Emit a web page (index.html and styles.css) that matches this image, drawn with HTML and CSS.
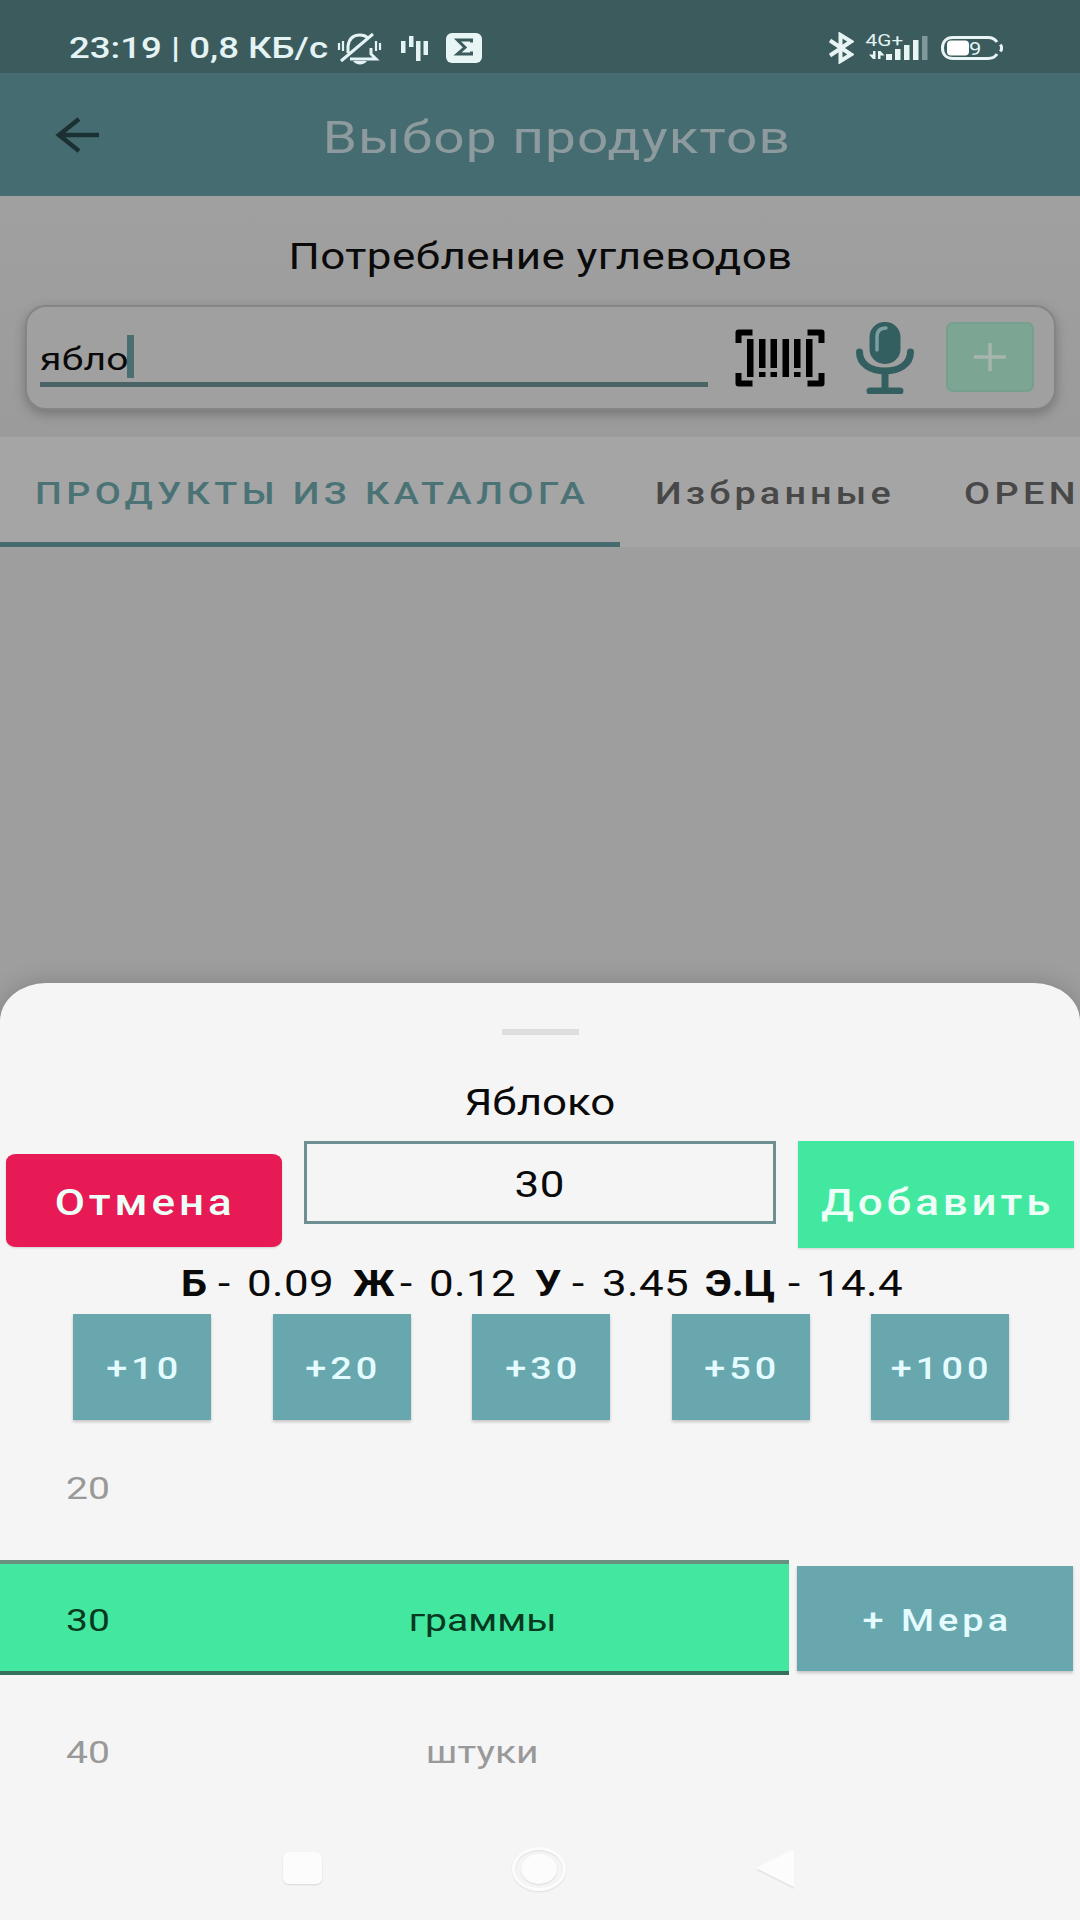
FILE: index.html
```html
<!DOCTYPE html>
<html lang="ru">
<head>
    <meta charset="UTF-8">
    <meta name="viewport" content="width=device-width, initial-scale=1.0">
    <title>Выбор продуктов</title>
    <link rel="stylesheet" href="styles.css">
</head>
<body>
    <div id="screen">
        <div id="status">
            <div class="clock"><span class="t left">23:19 | 0,8 КБ/с</span></div>
            <svg class="bell" width="46" height="34" viewBox="0 0 46 34" fill="none" stroke="#e4f3f3" stroke-width="3">
                <path d="M11 21v-7C12 7 16 3 23 3c3 0 6 1 8 3M13 27h26l-5-5v-6M4 29L36 2"/>
                <path d="M16 29h14c-3 4.500-11 4.500-14 0z" fill="#e4f3f3" stroke="none"/>
                <path d="M2 11v7M6 9v10M39 9v10M43 11v7" stroke-width="2.200"/>
            </svg>
            <svg class="wave" width="28" height="26" viewBox="0 0 28 26" fill="#e4f3f3">
                <path d="M0 5h4.500v12H0zM8 0h4.500v11H8zM15 5h4.500v20H15zM22.500 5H27v14h-4.500z"/>
            </svg>
            <svg class="sigma" width="36" height="30" viewBox="0 0 36 30">
                <rect width="36" height="30" rx="6" fill="#e9f5f5"/>
                <path d="M25.500 9.500V7H11.500l7.500 7.500-7.500 6.500h14v-2.500" fill="none" stroke="#3b5b5d" stroke-width="3"/>
            </svg>
            <svg class="bt" width="26" height="32" viewBox="0 0 26 32" fill="none" stroke="#e9f5f5" stroke-width="4">
                <path d="M2 8.500l21 14L12.500 29V3L23 9.500 2 23.500"/>
            </svg>
            <div class="signal">
                <span class="t net">4G+</span>
                <svg width="62" height="26" viewBox="0 0 62 26" fill="#e9f5f5">
                    <path d="M4 15h2.500v8H4zM0 18.500h4V23zM9 15h2.500v8H9zM11.500 15l4 4.500h-4z"/>
                    <rect x="17" y="18" width="6" height="6"/>
                    <rect x="26" y="13" width="5.500" height="11"/>
                    <rect x="35" y="9" width="5.500" height="15"/>
                    <rect x="44" y="4" width="5.500" height="20"/>
                    <rect x="53" y="0" width="5.500" height="24" opacity=".4"/>
                </svg>
            </div>
            <div class="battery">
                <svg width="62" height="24" viewBox="0 0 62 24" fill="none" stroke="#e9f5f5" stroke-width="3">
                    <path d="M56 6C54 3 51 1.500 47 1.500H12C5 1.500 1.500 6 1.500 12S5 22.500 12 22.500h35c4 0 7-1.500 9-4.500"/>
                    <rect x="6" y="4.500" width="22" height="15" rx="4" fill="#fff" stroke="none"/>
                    <path d="M59.500 8.500c1.200 2 1.200 5 0 7"/>
                </svg>
                <span class="t level">9</span>
            </div>
        </div>

        <div id="header">
            <svg class="back" width="46" height="36" viewBox="0 0 46 36" fill="none" stroke="#1b3033" stroke-width="4.500">
                <path d="M44 18H4M24 2L4 18l20 16"/>
            </svg>
            <h1><span class="t">Выбор продуктов</span></h1>
        </div>

        <div id="search">
            <h2><span class="t">Потребление углеводов</span></h2>
            <div class="card">
                <div class="field"><span class="t left">ябло</span><i class="cursor"></i></div>
                <svg class="barcode" width="90" height="58" viewBox="0 0 90 58">
                    <path d="M3.500 14V3.500h14M72.500 3.500h14V14M86.500 44v10.500h-14M17.500 54.500h-14V44" fill="none" stroke="#000" stroke-width="6" stroke-linejoin="round"/>
                    <path d="M12 10h6.500v38H12zM24 10h6.500v29H24zM24 43h6.500v5H24zM35.500 10H42v29h-6.500zM35.500 43H42v5h-6.500zM47.500 10H54v38h-6.500zM59 10h6.500v29H59zM59 43h6.500v5H59zM71 10h6.500v38H71z"/>
                </svg>
                <svg class="mic" width="58" height="72" viewBox="0 0 58 72">
                    <rect x="13.500" y="0" width="31" height="42" rx="15" fill="#345f61"/>
                    <path d="M3.500 30c0 12 11 19 25.500 19s25.500-7 25.500-19M29 49v20M14 69h30" fill="none" stroke="#345f61" stroke-width="7" stroke-linecap="round"/>
                    <path d="M21 28V15c0-6 3-9 9-9" fill="none" stroke="#7b9fa0" stroke-width="3.500" stroke-linecap="round"/>
                </svg>
                <div class="plus">
                    <svg width="32" height="28" viewBox="0 0 32 28" stroke="#a6b5ad" stroke-width="3.500"><path d="M0 14h32M16 0v28"/></svg>
                </div>
            </div>
        </div>

        <div id="tabs">
            <div class="tab active"><span class="t left">ПРОДУКТЫ ИЗ КАТАЛОГА</span></div>
            <div class="tab fav"><span class="t left">Избранные</span></div>
            <div class="tab open"><span class="t left">OPEN</span></div>
        </div>

        <div id="sheet">
            <div class="handle"></div>
            <h3><span class="t">Яблоко</span></h3>
            <div class="entry">
                <div class="cancel"><span class="t sp">Отмена</span></div>
                <div class="amount"><span class="t">30</span></div>
                <div class="add"><span class="t sp">Добавить</span></div>
            </div>
            <div class="facts">
                <b class="t left">Б</b><span class="t left">-</span><span class="t left">0.09</span>
                <b class="t left">Ж</b><span class="t left">-</span><span class="t left">0.12</span>
                <b class="t left">У</b><span class="t left">-</span><span class="t left">3.45</span>
                <b class="t left">Э.Ц</b><span class="t left">-</span><span class="t left">14.4</span>
            </div>
            <div class="steps">
                <div class="btn"><span class="t">+10</span></div>
                <div class="btn"><span class="t">+20</span></div>
                <div class="btn"><span class="t">+30</span></div>
                <div class="btn"><span class="t">+50</span></div>
                <div class="btn"><span class="t">+100</span></div>
            </div>
            <div class="picker">
                <div class="row"><div class="num"><span class="t">20</span></div></div>
                <div class="middle">
                    <div class="row selected">
                        <div class="num"><span class="t">30</span></div>
                        <div class="unit"><span class="t">граммы</span></div>
                    </div>
                    <div class="btn measure"><span class="t">+ Мера</span></div>
                </div>
                <div class="row">
                    <div class="num"><span class="t">40</span></div>
                    <div class="unit"><span class="t">штуки</span></div>
                </div>
            </div>
            <div class="nav">
                <div class="square"></div>
                <div class="home"><div></div></div>
                <svg class="prev" width="42" height="42" viewBox="0 0 42 42">
                    <path d="M1 22L39 41V4" fill="#e6e6e6"/>
                    <path d="M1 20L39 1v38z" fill="#fcfcfc"/>
                </svg>
            </div>
        </div>
    </div>
</body>
</html>
```
FILE: styles.css
```css
*{
    box-sizing: border-box;
}
body{
    margin: 0;
    font-family: Roboto, sans-serif;
    background: #9e9e9e;
}
h1, h2, h3{
    margin: 0;
    font-weight: 400;
}
#screen{
    width: 1080px;
    height: 1920px;
    display: flex;
    flex-direction: column;
    overflow: hidden;
    background: #9e9e9e;
}
/* wide lettering used everywhere */
.t{
    display: inline-block;
    white-space: pre;
    transform: scaleX(1.22);
}
.left{
    transform-origin: left;
}

#status{
    height: 73px;
    flex: none;
    display: flex;
    align-items: flex-start;
    padding-left: 69px;
    background: #3b5b5d;
    color: #e4f3f3;
}
.clock{
    width: 268px;
    font-size: 30px;
    line-height: 96px;
    font-weight: 500;
}
.bell{
    margin-top: 32px;
}
.wave{
    margin: 36px 0 0 18px;
}
.sigma{
    margin: 33px 0 0 17px;
}
.bt{
    margin: 32px 0 0 346px;
}
.signal{
    margin: 31px 0 0 12px;
    width: 64px;
    position: relative;
}
.signal svg{
    margin: 5px 0 0 3px;
}
.net{
    position: absolute;
    left: 3px;
    top: 0;
    font-size: 17px;
    line-height: 18px;
}
.battery{
    margin: 36px 0 0 11px;
    position: relative;
}
.level{
    position: absolute;
    left: 29px;
    top: 1px;
    font-size: 18px;
    line-height: 24px;
}

#header{
    height: 123px;
    flex: none;
    display: flex;
    align-items: center;
    background: #456c70;
}
.back{
    margin-left: 55px;
}
#header h1{
    width: 911px;
    margin-top: 6px;
    text-align: center;
    font-size: 45px;
    line-height: 60px;
    letter-spacing: 0.9px;
    color: #8e9b9e;
}

#search{
    height: 241px;
    flex: none;
    padding: 37px 24px 0 25px;
    background: linear-gradient(#a0a0a0, #9b9b9b);
}
#search h2{
    height: 72px;
    text-align: center;
    font-size: 36px;
    line-height: 48px;
    letter-spacing: 0.35px;
    color: #0a0a0a;
}
.card{
    height: 105px;
    display: flex;
    align-items: flex-start;
    border: 2px solid #858585;
    border-radius: 21px;
    background: #a0a0a0;
    box-shadow: 0 4px 12px rgba(0, 0, 0, 0.25);
}
.field{
    width: 668px;
    height: 65px;
    margin: 15px 0 0 13px;
    display: flex;
    border-bottom: 5px solid #4a6365;
    font-size: 32px;
    line-height: 74px;
    letter-spacing: 0.2px;
    color: #0a0a0a;
}
.field .t{
    width: 87px;
}
.cursor{
    width: 7px;
    height: 43px;
    margin-top: 13px;
    background: #4b6f71;
}
.barcode{
    margin: 22px 0 0 27px;
}
.mic{
    margin: 15px 0 0 31px;
}
.plus{
    width: 88px;
    height: 70px;
    margin: 15px 0 0 32px;
    display: flex;
    align-items: center;
    justify-content: center;
    border: 2px solid #76a08e;
    border-radius: 7px;
    background: #7da593;
}

#tabs{
    height: 110px;
    flex: none;
    display: flex;
    background: #a5a5a5;
    font-size: 31px;
    line-height: 114px;
    font-weight: 500;
    letter-spacing: 3.6px;
    color: #484848;
}
.tab{
    flex: none;
    padding-left: 35px;
}
.active{
    width: 620px;
    border-bottom: 5px solid #466a6d;
    color: #4b7376;
}
.fav{
    width: 309px;
    letter-spacing: 3.4px;
}

#sheet{
    height: 937px;
    margin-top: auto;
    flex: none;
    border-radius: 46px 46px 0 0 / 38px 38px 0 0;
    background: #f5f5f5;
    box-shadow: 0 0 24px rgba(0, 0, 0, 0.18);
    color: #0a0a0a;
}
.handle{
    width: 77px;
    height: 6px;
    margin: 46px auto 24px;
    background: #dedede;
}
#sheet h3{
    height: 82px;
    text-align: center;
    font-size: 36px;
    line-height: 88px;
}
.entry{
    height: 107px;
    display: flex;
    font-size: 36px;
}
.cancel{
    width: 276px;
    height: 93px;
    margin: 13px 22px 0 6px;
    border-radius: 10px / 8px;
    background: #e81a55;
    line-height: 98px;
}
.amount{
    width: 472px;
    height: 83px;
    border: 3px solid #6f9092;
    line-height: 82px;
    letter-spacing: 0.5px;
    text-align: center;
}
.add{
    width: 276px;
    margin-left: 22px;
    background: #43e8a0;
    line-height: 124px;
}
.cancel, .add{
    text-align: center;
    color: #eefff8;
    font-weight: 500;
    letter-spacing: 3.2px;
    box-shadow: 0 1px 2px rgba(0, 0, 0, 0.15);
}
.sp{
    margin-right: -3px;
}
.facts{
    height: 66px;
    display: grid;
    grid-template-columns: 37px 29px 106px 47px 29px 106px 37px 30px 103px 83px 28px 100px;
    padding-left: 181px;
    font-size: 36px;
    line-height: 72px;
    letter-spacing: 0.3px;
}
.facts b{
    transform: scaleX(1.15);
    letter-spacing: 0;
}
.btn{
    background: #67a7ad;
    color: #e4fbff;
    text-align: center;
    font-size: 31px;
    line-height: 110px;
    font-weight: 500;
    letter-spacing: 3.3px;
    box-shadow: 0 2px 3px rgba(0, 0, 0, 0.2);
}
.btn .t{
    margin-right: -4px;
}
.steps{
    height: 106px;
    padding: 0 71px 0 73px;
    display: flex;
    justify-content: space-between;
}
.steps .btn{
    width: 138px;
}
.picker{
    font-size: 32px;
    color: #999;
}
.row{
    height: 140px;
    display: flex;
    line-height: 136px;
}
.num{
    width: 176px;
    text-align: center;
}
.unit{
    width: 613px;
    text-align: center;
}
.middle{
    display: flex;
}
.selected{
    width: 789px;
    height: 115px;
    border-top: 4px solid #6a9080;
    border-bottom: 4px solid #35705a;
    background: #43e8a0;
    line-height: 112px;
    color: #083820;
}
.measure{
    width: 276px;
    height: 105px;
    margin: 6px 0 0 8px;
}
.picker > .row:last-child{
    height: 177px;
    line-height: 154px;
}
.nav{
    display: flex;
    align-items: flex-start;
}
.square{
    width: 39px;
    height: 32px;
    margin-left: 283px;
    border-radius: 6px;
    background: #fcfcfc;
    box-shadow: 0 1px 2px rgba(0, 0, 0, 0.12);
}
.home{
    width: 54px;
    height: 44px;
    margin: -5px 0 0 190px;
    padding: 4px 6px;
    border: 3px solid #fcfcfc;
    border-radius: 50%;
    box-shadow: 0 1px 2px rgba(0, 0, 0, 0.1), inset 0 1px 2px rgba(0, 0, 0, 0.1);
}
.home div{
    height: 30px;
    border-radius: 50%;
    background: #fcfcfc;
    box-shadow: 0 1px 2px rgba(0, 0, 0, 0.1);
}
.prev{
    margin: -4px 0 0 189px;
}
```
